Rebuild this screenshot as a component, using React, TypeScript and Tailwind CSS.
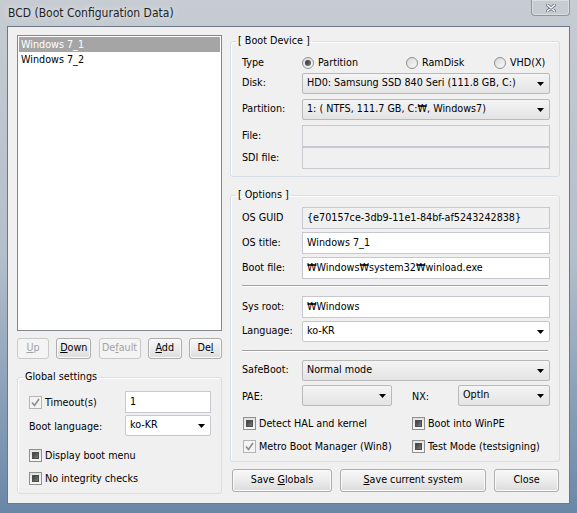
import React from 'react'

type Kids = { children?: React.ReactNode }

function Btn({ children, w, disabled }: Kids & { w: string, disabled?: boolean }) {
    return (
        <div
            className={`${w} h-full flex items-center justify-center rounded-[3px] border ${
                disabled
                    ? 'border-[#c9c9c9] bg-[#f4f4f4] text-[#a3a3a3]'
                    : 'border-[#acacac] bg-linear-to-b from-[#f7f7f7] via-[#ececec] to-[#dcdcdc] text-black shadow-[inset_0_0_0_1px_#fbfbfb]'
            }`}
        >
            <span className="whitespace-pre">{children}</span>
        </div>
    )
}

function Check({ state, children }: Kids & { state: 'mixed' | 'checked' }) {
    return (
        <div className="flex items-center gap-[3px] h-[13px]">
            {state === 'mixed' ? (
                <div className="w-[13px] h-[13px] border border-[#8e8f8f] bg-linear-to-b from-[#e2e2e2] to-[#f7f7f7] flex items-center justify-center">
                    <div className="w-[7px] h-[7px] border border-[#4d4d4d] bg-linear-to-br from-[#3e3e3e] to-[#7a7a7a]" />
                </div>
            ) : (
                <div className="w-[13px] h-[13px] border border-[#b4b4b4] bg-[#f4f4f4] flex items-center justify-center">
                    <svg width="9" height="9" viewBox="0 0 9 9">
                        <path d="M1 4.5 L3.5 7.5 L8 1" fill="none" stroke="#8c8c8c" strokeWidth="1.6" />
                    </svg>
                </div>
            )}
            <span className="leading-[13px] whitespace-nowrap">{children}</span>
        </div>
    )
}

function Radio({ on, children }: Kids & { on?: boolean }) {
    return (
        <div className="flex items-center gap-[4px]">
            <div className="w-[12px] h-[12px] rounded-full border border-[#8e8f8f] bg-linear-to-br from-[#d9d9d9] to-[#fafafa] flex items-center justify-center">
                {on && <div className="w-[6px] h-[6px] rounded-full bg-linear-to-br from-[#2f2f2f] to-[#7c7c7c]" />}
            </div>
            <span>{children}</span>
        </div>
    )
}

function Arrow() {
    return (
        <svg width="7" height="4" viewBox="0 0 7 4" className="ml-auto mr-[5px] shrink-0">
            <polygon points="0,0 7,0 3.5,4" fill="#000" />
        </svg>
    )
}

function Select({ value, w = 'w-[248px]', white }: { value?: string, w?: string, white?: boolean }) {
    return (
        <div
            className={`${w} h-[21px] flex items-center pl-[4px] rounded-[2px] border ${
                white
                    ? 'border-[#c5c9cf] bg-white'
                    : 'border-[#b9b9b9] bg-linear-to-b from-[#f4f4f4] to-[#e4e4e4]'
            }`}
        >
            <span className="whitespace-nowrap">{value}</span>
            <Arrow />
        </div>
    )
}

function Input({ value, w = 'w-[248px]', gray }: { value?: string, w?: string, gray?: boolean }) {
    return (
        <div
            className={`${w} h-[22px] flex items-center pl-[4px] border ${
                gray ? 'border-[#c6c9cd] bg-[#f0f0f0]' : 'border-[#c5c9cf] bg-white'
            }`}
        >
            <span className="whitespace-nowrap">{value}</span>
        </div>
    )
}

function Row({ label, children, className = '' }: Kids & { label: string, className?: string }) {
    return (
        <div className={`flex items-center ${className}`}>
            <span className="w-[60px] shrink-0">{label}</span>
            {children}
        </div>
    )
}

function Group({ title, className = '', children }: Kids & { title: string, className?: string }) {
    return (
        <fieldset className={`border border-[#d5dfe5] rounded-[3px] shadow-[inset_1px_1px_0_#fff] ${className}`}>
            <legend className="-ml-[6px] px-[2px] leading-[14px]">{title}</legend>
            {children}
        </fieldset>
    )
}

function Sep({ className = '' }: { className?: string }) {
    return <div className={`h-[2px] mr-[2px] border-t border-b border-t-[#a0a0a0] border-b-white ${className}`} />
}

export default function App() {
    return (
        <div className="w-[577px] h-[513px] flex flex-col bg-linear-to-b from-[#c6ccd2] via-[#b3bfcb] to-[#6a87a8] font-['DejaVu_Sans_Condensed','Liberation_Sans',sans-serif] text-[10.7px] text-black overflow-hidden">
            {/* title bar */}
            <div className="h-[26px] shrink-0 flex items-start">
                <span className="ml-[8px] mt-[5px] text-[12px] leading-[16px] text-[#1f1f1f] [text-shadow:0_0_6px_rgba(255,255,255,0.9)]">
                    BCD (Boot Configuration Data)
                </span>
                <div className="ml-auto mr-[7px] w-[39px] h-[16px] rounded-b-[4px] border border-t-0 border-[#8c96a2] shadow-[inset_0_0_0_1px_rgba(255,255,255,0.35)] flex items-center justify-center">
                    <svg width="10" height="8" viewBox="0 0 10 8">
                        <path d="M1.5 1 L8.5 7 M8.5 1 L1.5 7" stroke="#6d7680" strokeWidth="3" strokeLinecap="round" />
                        <path d="M1.5 1 L8.5 7 M8.5 1 L1.5 7" stroke="#f4f6f8" strokeWidth="1.6" strokeLinecap="round" />
                    </svg>
                </div>
            </div>

            {/* client area */}
            <div className="mx-[7px] h-[478px] shrink-0 border border-[#6c7886] bg-[#f0f0f0] flex pl-[9px] pt-[7px] gap-[8px]">
                {/* left column */}
                <div className="w-[205px] flex flex-col">
                    <div className="mt-[1px] h-[296px] border border-[#828790] bg-white pt-[1px] px-[1px]">
                        <div className="h-[15px] leading-[15px] pl-[2px] bg-[#a5a5a5] text-white">Windows 7_1</div>
                        <div className="h-[15px] leading-[15px] pl-[2px]">Windows 7_2</div>
                    </div>

                    <div className="mt-[7px] h-[21px] flex justify-between">
                        <Btn w="w-[32px]" disabled><u>U</u>p</Btn>
                        <Btn w="w-[35px]"><u>D</u>own</Btn>
                        <Btn w="w-[42px]" disabled>De<u>f</u>ault</Btn>
                        <Btn w="w-[34px]"><u>A</u>dd</Btn>
                        <Btn w="w-[33px]">De<u>l</u></Btn>
                    </div>

                    <Group title="Global settings" className="mt-[11px] pl-[11px] pr-[10px] pb-[8px]">
                        <div className="mt-[7px] h-[22px] flex items-center">
                            <div className="w-[96px]"><Check state="checked">Timeout(s)</Check></div>
                            <Input value="1" w="w-[86px]" />
                        </div>
                        <div className="mt-[2px] h-[21px] flex items-center">
                            <span className="w-[96px] pt-[3px]">Boot language:</span>
                            <Select value="ko-KR" w="w-[86px]" white />
                        </div>
                        <div className="mt-[13px]"><Check state="mixed">Display boot menu</Check></div>
                        <div className="mt-[10px]"><Check state="mixed">No integrity checks</Check></div>
                    </Group>
                </div>

                {/* right column */}
                <div className="w-[330px] flex flex-col">
                    <Group title="[ Boot Device ]" className="pl-[11px] pr-[9px] pb-[7px]">
                        <div className="mt-[8px] h-[14px] flex items-center">
                            <span className="w-[60px]">Type</span>
                            <div className="w-[104px]"><Radio on>Partition</Radio></div>
                            <div className="w-[88px]"><Radio>RamDisk</Radio></div>
                            <Radio>VHD(X)</Radio>
                        </div>
                        <Row label="Disk:" className="mt-[3px]">
                            <Select value="HD0: Samsung SSD 840 Seri (111.8 GB, C:)" />
                        </Row>
                        <Row label="Partition:" className="mt-[5px]">
                            <Select value="1: ( NTFS, 111.7 GB, C:₩, Windows7)" />
                        </Row>
                        <Row label="File:" className="mt-[5px]">
                            <Input gray />
                        </Row>
                        <Row label="SDI file:">
                            <Input gray />
                        </Row>
                    </Group>

                    <Group title="[ Options ]" className="mt-[11px] pl-[11px] pr-[9px] pb-[8px]">
                        <Row label="OS GUID" className="mt-[5px]">
                            <Input gray value="{e70157ce-3db9-11e1-84bf-af5243242838}" />
                        </Row>
                        <Row label="OS title:" className="mt-[3px]">
                            <Input value="Windows 7_1" />
                        </Row>
                        <Row label="Boot file:" className="mt-[3px]">
                            <Input value="₩Windows₩system32₩winload.exe" />
                        </Row>
                        <Sep className="mt-[6px]" />
                        <Row label="Sys root:" className="mt-[9px]">
                            <Input value="₩Windows" />
                        </Row>
                        <Row label="Language:" className="mt-[3px]">
                            <Select value="ko-KR" white />
                        </Row>
                        <Sep className="mt-[8px]" />
                        <Row label="SafeBoot:" className="mt-[8px]">
                            <Select value="Normal mode" />
                        </Row>
                        <div className="mt-[4px] flex items-center">
                            <span className="w-[60px] pt-[4px]">PAE:</span>
                            <Select w="w-[90px]" />
                            <span className="ml-[20px] w-[46px] pt-[4px]">NX:</span>
                            <Select value="OptIn" w="w-[92px]" />
                        </div>
                        <div className="mt-[11px] flex">
                            <div className="w-[170px] pl-[1px]"><Check state="mixed">Detect HAL and kernel</Check></div>
                            <Check state="mixed">Boot into WinPE</Check>
                        </div>
                        <div className="mt-[10px] flex">
                            <div className="w-[170px] pl-[1px]"><Check state="checked">Metro Boot Manager (Win8)</Check></div>
                            <Check state="mixed">Test Mode (testsigning)</Check>
                        </div>
                    </Group>

                    <div className="mt-[7px] h-[23px] flex gap-[8px] pl-[2px]">
                        <Btn w="w-[100px]">Save <u>G</u>lobals</Btn>
                        <Btn w="w-[146px]"><u>S</u>ave current system</Btn>
                        <Btn w="w-[65px]">Close</Btn>
                    </div>
                </div>
            </div>
        </div>
    )
}
